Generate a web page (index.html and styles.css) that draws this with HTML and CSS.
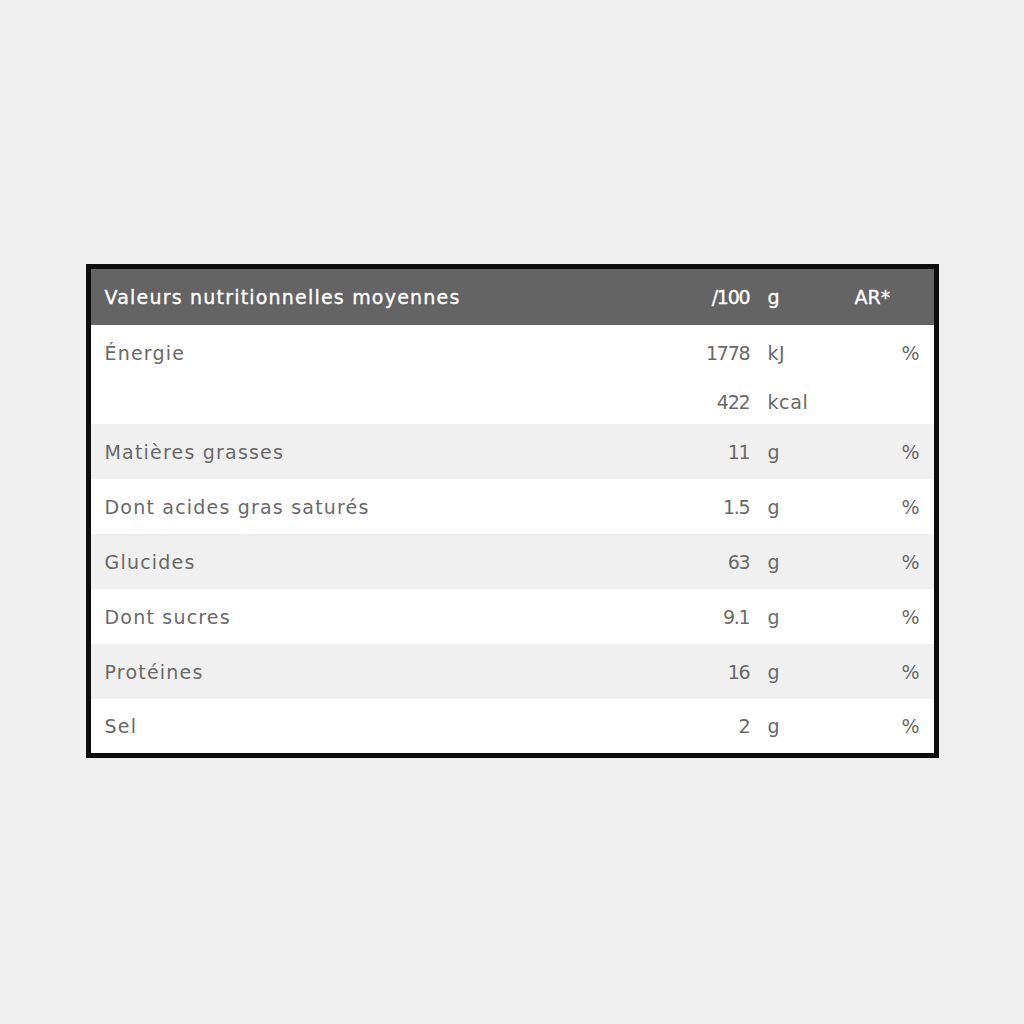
FILE: index.html
```html
<!DOCTYPE html>
<html lang="fr">
<head>
<meta charset="utf-8">
<title>Valeurs nutritionnelles</title>
<link rel="stylesheet" href="styles.css">
</head>
<body>
<main class="page">
  <section class="panel">
    <div class="row head">
      <div class="label">Valeurs nutritionnelles moyennes</div>
      <div class="val">/100</div>
      <div class="unit">g</div>
      <div class="ar ar-head">AR*</div>
    </div>
    <div class="row energy">
      <div class="sub first">
        <div class="label">Énergie</div>
        <div class="val">1778</div>
        <div class="unit">kJ</div>
        <div class="ar">%</div>
      </div>
      <div class="sub second">
        <div class="label"></div>
        <div class="val">422</div>
        <div class="unit">kcal</div>
        <div class="ar"></div>
      </div>
    </div>
    <div class="row shade">
      <div class="label">Matières grasses</div>
      <div class="val">11</div>
      <div class="unit">g</div>
      <div class="ar">%</div>
    </div>
    <div class="row">
      <div class="label">Dont acides gras saturés</div>
      <div class="val">1.5</div>
      <div class="unit">g</div>
      <div class="ar">%</div>
    </div>
    <div class="row shade">
      <div class="label">Glucides</div>
      <div class="val">63</div>
      <div class="unit">g</div>
      <div class="ar">%</div>
    </div>
    <div class="row">
      <div class="label">Dont sucres</div>
      <div class="val">9.1</div>
      <div class="unit">g</div>
      <div class="ar">%</div>
    </div>
    <div class="row shade">
      <div class="label">Protéines</div>
      <div class="val">16</div>
      <div class="unit">g</div>
      <div class="ar">%</div>
    </div>
    <div class="row last">
      <div class="label">Sel</div>
      <div class="val">2</div>
      <div class="unit">g</div>
      <div class="ar">%</div>
    </div>
  </section>
</main>
</body>
</html>
```
FILE: styles.css
```css
html, body {
  margin: 0;
  padding: 0;
  background: #efefef;
}
.page {
  display: flex;
  justify-content: center;
  padding-top: 264px;
  font-family: "DejaVu Sans", "Open Sans", sans-serif;
  font-size: 19px;
  color: #696969;
}
.panel {
  width: 843px;
  border: 5px solid #0d0d0d;
  background: #ffffff;
}
.row, .sub {
  display: grid;
  grid-template-columns: 1fr 80px 89px 80px;
  align-items: center;
  padding: 0 14px;
  height: 55px;
}
.label { letter-spacing: 1.2px; }
.unit { letter-spacing: 0.6px; }
.row.energy {
  display: block;
  height: 99px;
  padding: 0;
}
.sub.first { height: 55px; }
.sub.second { height: 44px; }
.head {
  background: #646464;
  color: #ffffff;
  height: 56px;
  -webkit-text-stroke: 0.35px #ffffff;
}
.shade { background: #f0f0f0; }
.last { height: 54px; }
.val {
  text-align: right;
  letter-spacing: -1.2px;
  padding-right: 1px;
}
.unit { padding-left: 17px; }
.ar { text-align: right; }
.ar-head { text-align: left; padding-left: 15px; }
```
